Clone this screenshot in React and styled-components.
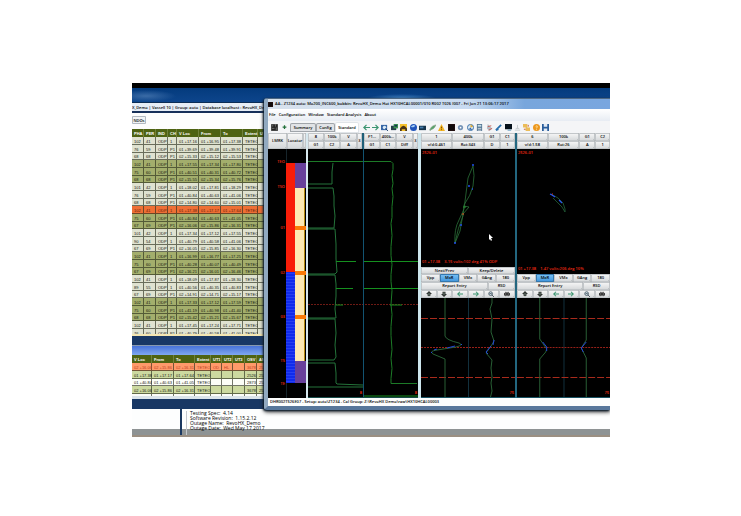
import React from "react";
import styled, { createGlobalStyle, css } from "styled-components";

const Global = createGlobalStyle`
  * { box-sizing: border-box; }
  body { margin: 0; background: #fff; font-family: "Open Sans", sans-serif; font-size: 4px; font-weight: 600; color: #000; }
  button { font: inherit; color: inherit; padding: 0; margin: 0; border: 0; min-width: 0; }
`;

const Page = styled.main`padding: 83px 131px 80px 132px;`;
const Desktop = styled.div`
  position: relative;
  overflow: hidden;
  background: #fdfefe;
`;

/* ---------- background application ---------- */
const TopStrip = styled.div`
  height: 20px;
  border-top: 5px solid #000;
  border-bottom: 1px solid #0b2c55;
  background: radial-gradient(ellipse 34px 4px at 270px 10px, #3d7fc0, transparent), radial-gradient(ellipse 30px 6px at 14px 8px, #3a6ba6, transparent), linear-gradient(#043b7d, #0d458c);
`;
const PathBar = styled.div`
  height: 10px;
  line-height: 9px;
  background: #e6edf6;
  border-bottom: 2px solid #17305a;
  white-space: nowrap;
  overflow: hidden;
`;
const FilterBar = styled.div`
  height: 16px;
  padding-top: 3px;
  background: #fdfdfd;
`;
const FilterButton = styled.button`
  height: 8px;
  width: 14px;
  line-height: 7px;
  background: #f2f4f6;
  box-shadow: inset 0 0 0 1px #b3bac2;
  border-radius: 1px;
`;
const Side = styled.div`width: 136px;`;
const Table = styled.table`
  width: 136px;
  table-layout: fixed;
  border-collapse: collapse;
  font-family: "Liberation Sans", Arial, sans-serif;
  font-size: 4px;
`;
const tones = { light: "#dfe2d0", green: "#a3ae6c", orange: "#ee6f35", white: "#fcfdf8", pale: "#ccd9a0", coral: "#ff9a6a" };
const Th = styled.th`
  height: 8px;
  line-height: 7px;
  padding: 0 0 0 2px;
  background: #4e6312;
  color: #fff;
  text-align: left;
  white-space: nowrap;
  overflow: hidden;
  box-shadow: inset -1px 0 #71813c;
`;
const Tr = styled.tr`
  height: ${(p) => (p.$short ? 7 : 8)}px;
  background: ${(p) => tones[p.$tone]};
  color: ${(p) => (p.$tone === "coral" ? "#c13d20" : p.$tone === "orange" ? "#641c08" : "#14160e")};
`;
const Td = styled.td`
  padding: 0 0 0 2px;
  font-weight: 400;
  line-height: 7px;
  white-space: nowrap;
  overflow: hidden;
  box-shadow: inset -1px -1px rgba(42, 46, 28, 0.65);
`;
const TableClip = styled.div`
  height: ${(p) => p.$h}px;
  overflow: hidden;
`;
const NavyBand = styled.div`
  height: 12px;
  background: #183764;
  border-top: 2px solid #f4e6b2;
  border-bottom: 1px solid #8799ae;
`;
const PanelTitle = styled.div`height: 9px; background: linear-gradient(#4772d8, #80a8f0);`;
const LowerBand = styled.div`height: 13px; background: #183764; border-top: 3px solid #dbe4ea;`;
const InfoRow = styled.div`
  display: grid;
  grid-template-columns: 50px 1fr;
  height: 28px;
  border-bottom: 2px solid #9b8f82;
  background: linear-gradient(#fdfefe 20px, #8e9394 20px);
`;
const InfoSide = styled.div`border-right: 2px solid #1a3860;`;
const Info = styled.div`
  margin: 2px 0 0 4px;
  padding-left: 3px;
  overflow: hidden;
  border-left: 1px solid #c4c9ce;
  font-size: 5px;
  font-weight: 400;
  line-height: 5px;
`;

/* ---------- analysis window ---------- */
const Window = styled.section`
  position: absolute;
  top: 15px;
  left: 132px;
  right: 0;
  border-left: 4px solid #91a9c0;
  border-bottom: 4px solid #58779b;
  border-top: 1px solid #4d6782;
  border-radius: 3px 0 0 3px;
  background: #eef1f5;
  box-shadow: -1px 1px 2px #091a2b, 0 2px 4px #333;
`;
const TitleBar = styled.header`
  display: flex;
  align-items: center;
  gap: 2px;
  height: 10px;
  line-height: 10px;
  white-space: nowrap;
  background: linear-gradient(90deg, #d8e2ed 0, #c8dbf1 200px, #78a6dc 75%, #79a6df);
`;
const MenuBar = styled.nav`
  display: flex;
  gap: 3px;
  height: 12px;
  padding-left: 1px;
  line-height: 12px;
  background: linear-gradient(#fff, #e7ecf3);
`;
const MenuItem = styled.button`background: none; white-space: nowrap; line-height: 12px;`;
const ToolBar = styled.div`
  display: flex;
  align-items: center;
  height: 12px;
  background: #f4f5f7;
`;
const ToolIcons = styled.div`
  display: flex;
  justify-content: space-between;
  width: 188px;
  margin-left: 3px;
`;
const IconButton = styled.button`
  display: grid;
  place-items: center;
  width: 8px;
  height: 9px;
  background: none;
`;
const Lead = styled.div`display: flex; gap: 4px; width: 22px; padding-left: 3px;`;
const Tab = styled.button`
  width: ${(p) => p.$w}px;
  height: ${(p) => (p.$on ? 11 : 9)}px;
  line-height: 9px;
  background: ${(p) => (p.$on ? "#fff" : "#e1e3e6")};
  box-shadow: inset 0 0 0 1px ${(p) => (p.$on ? "#e0e4e8" : "#a0a5aa")};
  border-radius: 2px 2px 0 0;
`;
const Body = styled.div`
  display: grid;
  grid-template-columns: 38fr 112fr 97fr 95fr;
  height: 265px;
  background: #000;
`;
const Pane = styled.div`
  display: flex;
  flex-direction: column;
  min-width: 0;
  border-left: ${(p) => p.$edge || "0"};
`;
const Row = styled.div`
  display: grid;
  grid-template-columns: ${(p) => p.$cols};
  grid-auto-rows: ${(p) => p.$h || 8}px;
  flex: none;
  background: #8e959b;
`;
const Key = styled.button`
  display: grid;
  place-items: center;
  overflow: hidden;
  white-space: nowrap;
  line-height: 6px;
  background: ${(p) => (p.$on ? "linear-gradient(#7dc4f5, #3b92dc)" : "linear-gradient(#f8f8f8, #d3d6d8)")};
  box-shadow: inset 0 0 0 1px ${(p) => (p.$on ? "#3478ae" : "#c2c6c9")}, inset -1px -1px #777d82;
  border-radius: 1px;
  ${(p) => p.$tall && css`grid-row: span 2;`}
`;
const TwinHead = styled.div`display: grid; grid-template-columns: 1fr 1fr; gap: 2px; background: #1e5f78;`;
const Plot = styled.div`
  position: relative;
  flex: ${(p) => (p.$h ? "none" : "1")};
  height: ${(p) => (p.$h ? p.$h + "px" : "auto")};
  min-height: 0;
  background: #000;
`;
const Chart = styled.svg`display: block; position: absolute; inset: 0; width: 100%; height: 100%;`;
const Mark = styled.span`
  position: absolute;
  color: #f02a12;
  line-height: 6px;
  white-space: pre;
  ${(p) => p.$top !== undefined && `top: ${p.$top}px;`}
  ${(p) => p.$bottom !== undefined && `bottom: ${p.$bottom}px;`}
  ${(p) => (p.$right !== undefined ? `right: ${p.$right}px;` : `left: ${p.$left || 1}px;`)}
`;
const Status = styled.footer`
  height: 8px;
  padding-left: 2px;
  line-height: 8px;
  background: #fcfdfd;
  white-space: nowrap;
`;

const icons = {
  qr: <path d="M0 0h8v8H0z M2 1v2M5 0v3M1 5h3M6 4v3" fill="#222" stroke="#777" />,
  plus: <path d="M4 2v6M1 5h6" stroke="#23703a" strokeWidth="2" />,
  left: <path d="M8 4H2M4 1L1 4l3 3" stroke="#3b9570" strokeWidth="1.4" fill="none" />,
  right: <path d="M0 4h6M4 1l3 3-3 3" stroke="#3b9570" strokeWidth="1.4" fill="none" />,
  find: <><path d="M0 1h7v6H0z" fill="#3666a5" /><circle cx="4" cy="4" r="2" fill="#d9e9f5" /><path d="M5 5l3 3" stroke="#173a68" /></>,
  screen: <><path d="M0 2h6v5H0z" fill="#263f4a" /><path d="M3 0h5v5H3z" fill="#3c9550" /><path d="M4 1h3v2H4z" fill="#163450" /></>,
  bridge: <><path d="M0 0h8v8H0z" fill="#f4c02b" /><path d="M0 8V5q4-6 8 0v3H6V6H2v2z" fill="#493316" /></>,
  globe: <><circle cx="4" cy="4" r="4" fill="#2054ba" /><path d="M1 3q3-3 5-1Q4 5 1 3" fill="#a5cef4" /></>,
  camera: <><path d="M0 2h8v5H0z" fill="#17344b" /><path d="M1 3h4v2H1z" fill="#457dac" /></>,
  leaf: <path d="M1 7Q2 2 8 1 6 6 1 7M0 6l2 2" fill="#58a569" stroke="#809c84" strokeWidth=".7" />,
  warn: <><path d="M4 0l4 8H0z" fill="#f2b323" /><path d="M4 3v2M4 6v1" stroke="#6b4300" /></>,
  black: <path d="M0 0h8v8H0z" fill="#100b0b" stroke="#592020" strokeWidth=".5" />,
  gear: <><circle cx="4" cy="4" r="3" fill="#7795b8" /><circle cx="4" cy="4" r="1" fill="#fff" /></>,
  pie: <><circle cx="4" cy="4" r="3.5" fill="#d8e6ee" stroke="#2b65a3" /><path d="M4 4V0l3 3z" fill="#e1ad35" /><path d="M4 4l2 3-4-1z" fill="#2e62a9" /></>,
  calc: <><path d="M1 0h6v8H1z" fill="#577896" /><path d="M2 1h4v2H2z" fill="#c7e0e9" /><path d="M2 5h4M2 7h4" stroke="#dae0e4" /></>,
  tool: <><path d="M2 0l5 5-3 3-3-3z" fill="#b4bdc6" /><path d="M2 3l4-1M3 7l4-2" stroke="#c75248" /></>,
  pen: <path d="M1 7L7 1M1 7l3-1" stroke="#266eab" strokeWidth="2" />,
  monitor: <><path d="M0 0h8v6H0z" fill="#06111a" /><path d="M3 7h4" stroke="#4c8bb9" /></>,
  pale: <path d="M1 7h6M2 5h4M4 1v4" stroke="#c2c8cc" fill="none" />,
  folders: <><path d="M0 0h5v4H0zM3 4h5v4H3z" fill="#ebbc58" /><path d="M6 1v2M1 6h2" stroke="#c24c32" /></>,
  orange: <><circle cx="4" cy="4" r="4" fill="#ec981e" /><path d="M3 3q2-2 2 0L4 5M4 6v1" stroke="#ffe4a7" fill="none" /></>,
  save: <><path d="M0 0h8v8H0z" fill="#2a5d9b" /><path d="M2 0h4v3H2zM2 5h4v3H2z" fill="#e2eaf3" /></>,
  up: <><path d="M4 0L0 4h2v2q2 2 4 0V4h2z" fill="#303532" /><path d="M4 3v3" stroke="#8da79a" /></>,
  down: <><path d="M4 8L0 4h2V1h4v3h2z" fill="#303532" /><path d="M4 2v3" stroke="#8da79a" /></>,
  zoom: <><circle cx="3.5" cy="3.5" r="2.5" fill="#d6e8f0" stroke="#354753" /><path d="M5 5l3 3M2 3.5h3" stroke="#293740" /></>,
  print: <><path d="M0 3l2-1V1h1v1h2V1h1v1l2 1v3H6v1H5V6H3v1H2V6H0z" fill="#333" /><path d="M1 4h2M5 4h2" stroke="#999" /></>,
};
const Glyph = ({ name, size = 8 }) => <svg width={size} height={size} viewBox="0 0 8 8" aria-hidden="true">{icons[name]}</svg>;

const raw = `102 41 1 01 17.16 16.95 17.38
76 59 P1 01 39.69 39.48 39.91
68 68 P1 02 15.33 15.12 15.53
102 41 1 01 17.55 17.34 17.80
75 60 P1 01 40.51 40.31 40.72
68 68 P1 02 15.55 15.34 15.76
101 42 1 01 18.02 17.81 18.29
76 59 P1 01 40.84 40.63 41.06
68 68 P1 02 14.80 14.60 15.01
102 41 1 01 17.38 17.17 17.64
75 60 P1 01 40.84 40.63 41.05
67 69 P1 02 16.06 15.86 16.31
101 42 1 01 17.34 17.12 17.55
90 54 1 01 40.79 40.58 41.06
67 69 P1 02 16.05 15.85 16.30
102 41 1 01 16.99 16.77 17.25
75 60 P1 01 40.28 40.07 40.49
67 69 P1 02 16.21 16.01 16.46
102 41 1 01 18.09 17.87 18.30
89 55 1 01 40.56 40.35 40.83
67 69 P1 02 14.91 14.71 15.17
102 41 1 01 17.33 17.12 17.59
75 60 P1 01 41.19 40.98 41.40
68 68 P1 02 15.42 15.21 15.67
102 41 1 01 17.45 17.24 17.71
76 60 P1 01 40.79 40.58 41.00`;
const upper = raw.split("\n").map((l) => {
  const [a, b, c, n, v, f, t] = l.split(" ");
  return [a, b, "ODP", c, `${n} +${v}`, `${n} +${f}`, `${n} +${t}`, "TETEO", ""];
});
const lower = [
  ["coral", "02 +16.06", "02 +15.86", "02 +16.31", "TETEO", "OD", "HL", "", "3678", "252"],
  ["pale", "01 +17.38", "01 +17.17", "01 +17.64", "TETEO", "", "", "", "2526", "252"],
  ["white", "01 +40.84", "01 +40.63", "01 +41.05", "TETEO", "", "", "", "2873", "252"],
  ["pale", "02 +16.06", "02 +15.86", "02 +16.31", "TETEO", "", "", "", "3678", "252"],
  ["white", "02 +17.38", "02 +17.17", "02 +17.59", "TETEO", "OD", "HL", "", "2526", "252"],
];

function Grid({ widths, heads, rows, tone }) {
  return (
    <Table>
      <colgroup>{widths.map((w, i) => <col key={i} width={w} />)}</colgroup>
      <thead><tr>{heads.map((h, i) => <Th key={i}>{h}</Th>)}</tr></thead>
      <tbody>
        {rows.map((r, i) => (
          <Tr key={i} $short={i % 3 === 2} $tone={tone(i)}>{r.map((c, j) => <Td key={j}>{c}</Td>)}</Tr>
        ))}
      </tbody>
    </Table>
  );
}

function Background() {
  return (
    <>
      <TopStrip />
      <PathBar>X_Demo | Vassell 10 | Group: auto | Database localhost : RevoHX_Demo_</PathBar>
      <Side>
        <FilterBar><FilterButton>NDOs</FilterButton></FilterBar>
        <TableClip $h={205}>
          <Grid
            widths={[12, 12, 12, 9, 22, 22, 22, 15, 10]}
            heads={["PHA", "PER", "IND", "CH", "V Loc", "From", "To", "Extent", "U"]}
            rows={upper}
            tone={(i) => (i === 9 ? "orange" : Math.floor(i / 3) % 2 ? "green" : "light")}
          />
        </TableClip>
      </Side>
      <NavyBand />
      <PanelTitle />
      <TableClip $h={41}>
        <Grid
          widths={[20, 22, 21, 16, 11, 11, 12, 12, 11]}
          heads={["V Loc", "From", "To", "Extent", "UT1", "UT2", "UT3", "OSV", "AN"]}
          rows={lower.map((r) => r.slice(1))}
          tone={(i) => lower[i][0]}
        />
      </TableClip>
      <LowerBand />
      <InfoRow>
        <InfoSide />
        <Info>Testing Spec:&nbsp; 4.14<br />Software Revision:&nbsp; 1.15.2.12<br />Outage Name:&nbsp; RevoHX_Demo<br />Outage Date:&nbsp; Wed May 17 2017</Info>
      </InfoRow>
    </>
  );
}

function Locator() {
  const marks = [["TEO", 10], ["TSO", 35], ["01", 76], ["02", 121], ["03", 165], ["TS", 209], ["TE", 232]];
  return (
    <Pane>
      <Row $cols="19fr 16fr 3fr" $h={16}><Key>LMRK</Key><Key>Locator</Key><Key /></Row>
      <Plot>
        <Chart viewBox="0 0 38 249" preserveAspectRatio="none">
          <path d="M18.500 0V249" stroke="#17252b" />
          <path d="M18 14h9v109h-9z" fill="#f91d08" />
          <path d="M18 123h9v111h-9z" fill="#102bec" />
          <path d="M22.500 124V234" stroke="#5267ff" strokeWidth="9" strokeDasharray="1 2" opacity=".35" />
          <path d="M27 14h11v25H27zM27 212h11v22H27z" fill="#68409b" />
          <path d="M27 39h10v173H27z" fill="#feeab3" />
          <path d="M36.500 39V212" stroke="#b58c10" />
          <path d="M27 77h11v4H27zM27 122h11v4H27zM27 166h11v4H27z" fill="#fb7b08" />
        </Chart>
        {marks.map(([t, y]) => <Mark key={t} $top={y} $right={21}>{t}</Mark>)}
      </Plot>
    </Pane>
  );
}

function StripCharts() {
  return (
    <Pane $edge="2px solid #d7e8ef">
      <TwinHead>
        <Row $cols="16fr 16fr 17fr 5fr">
          <Key>8</Key><Key>100k</Key><Key>V</Key><Key $tall>3</Key><Key>G1</Key><Key>C2</Key><Key>A</Key>
        </Row>
        <Row $cols="16fr 16fr 17fr 5fr">
          <Key>P1...</Key><Key>400k...</Key><Key>V</Key><Key $tall>3</Key><Key>G1</Key><Key>C1</Key><Key>Diff</Key>
        </Row>
      </TwinHead>
      <Plot>
        <Chart viewBox="0 0 110 249" preserveAspectRatio="none" fill="none">
          <path d="M0 155.500H110" stroke="#6d1a14" strokeDasharray="2 1" />
          <path d="M0 12.500h83l2 2v6l-1 6 1 8-1 5 1 8-1 10 0 11-1 6 1 12-1 11v9l1 9-1 10v7l1 9-1 14 1 10-1 12v9l1 14-1 9 1 10-1 10v5h26" stroke="#1c7a27" />
          <path d="M25 14l-1 9v12H0M0 39h25l1 8v10l1 10-1 12H0M0 80h27l1 15v15l1 13-2 2H0M0 126h27l1 9v12l-1 13 1 9-28 0M0 170h27l1 14-1 12 1 12-2 3H0M0 214h27l1 10v10l1 1 26 1M0 238h55" stroke="#24733a" />
          <path d="M28 112.500h20M55 112.500h55M28 139.500h17M55 139.500h55M28 156h7M82 156h12M55 247h55" stroke="#15901f" />
          <path d="M55.500 0V249" stroke="#125371" />
          <path d="M0 248.500H110" stroke="#174c49" />
        </Chart>
        <Mark $bottom={2} $right={56}>8</Mark><Mark $bottom={2} $right={1}>8</Mark>
      </Plot>
    </Pane>
  );
}

const traces = {
  a: {
    head: ["1", "400k", "G1", "C1", "v/d:0.461", "Rot:343", "D", "1"],
    text: "01 +17.38    3.15 volts:102 deg 41% ODP", last: "75",
    left: "M24 0V38Q25 42 38 45 43 47 35 49L16 52Q8 53 12 56L24 61V100",
    leftBlue: "M41 46l-1 1M34 48l-8 2M16 51l-3 1M10 54l1 1",
    right: "M71 0v5l-2 6 2 10-1 13 3 9-3 5-5 7 6 7-1 8 1 9-1 6 1 8-3 12",
    rightBlue: "M73 42l-1 5M70 48l-5 6 2 2",
  },
  b: {
    head: ["6", "100k", "G1", "C2", "v/d:1.58", "Rot:26", "A", "1"],
    text: "01 +17.38    1.47 volts:206 deg 10%", last: "75",
    left: "M23 0V41L30 51 29 54 23 61V100", leftBlue: "M26 44l4 5v4",
    right: "M70 0V42l-5 8 5 10V100", rightBlue: "M70 44l-5 6 2 4",
  },
};

function SignalPane({ kind }) {
  const d = traces[kind];
  const a = kind === "a";
  return (
    <Pane $edge={a ? "3px solid #cee6ed" : "2px solid #236780"}>
      <Row $cols="31fr 32fr 16fr 15fr">{d.head.map((t, i) => <Key key={i}>{t}</Key>)}</Row>
      <Plot>
        {a ? (
          <Chart viewBox="0 0 94 118" fill="none">
            <path d="M52 17Q54 26 52 37 50 46 43 56L42 67Q37 78 34 94 33 80 38 71L43 60 47 29zM43 57l5 1-6 7-3 17-5 12" stroke="#2b7039" strokeWidth=".8" />
            <path d="M42 58h3" stroke="#2a9632" /><path d="M41 65h2" stroke="#ed5b24" />
            <path d="M51 16h2M47 37h2M39 76h2M33 94h2M51 40h1" stroke="#2050eb" strokeWidth="1.500" />
            <path d="M68 85v6l1-1 1 2 1-1-1-2h2z" fill="#fff" />
          </Chart>
        ) : (
          <Chart viewBox="0 0 93 125" fill="none">
            <path d="M34 45l7 4 5 5 2 6v3l-3-5-9-9" stroke="#23633a" strokeWidth=".8" />
            <path d="M33 45l2 1 3 2M42 51l3 3" stroke="#2854ef" strokeWidth="1.200" /><path d="M35 45h1" stroke="#de3019" />
          </Chart>
        )}
        <Mark $top={1}>2526-01</Mark>
        <Mark $bottom={2}>{d.text}</Mark>
      </Plot>
      {a && <Row $cols="1fr 1fr" $h={7}><Key>Next/Prev</Key><Key>Keep/Delete</Key></Row>}
      <Row $cols="repeat(5, 1fr)"><Key>Vpp</Key><Key $on>MxR</Key><Key>VMx</Key><Key>GAng</Key><Key>180</Key></Row>
      <Row $cols="67fr 27fr"><Key>Report Entry</Key><Key>RSD</Key></Row>
      <Row $cols="repeat(6, 1fr)">
        {[["up", "Previous"], ["down", "Next"], ["left", "Back"], ["right", "Forward"], ["zoom", "Zoom"], ["print", "Print"]].map(([n, l]) => <Key key={n} aria-label={l}><Glyph name={n} size={6} /></Key>)}
      </Row>
      <Plot $h={100}>
        <Chart viewBox="0 0 94 100" preserveAspectRatio="none" fill="none">
          <path d="M47.500 0V100" stroke="#12303d" />
          <path d="M0 20.500H94" stroke="#a92b1c" strokeDasharray="7 2" />
          <path d="M0 79.500H94" stroke="#a92b1c" strokeDasharray="7 2" />
          <path d="M0 49.500H94" stroke="#982018" strokeDasharray="2 1" />
          <path d={d.left} stroke="#285f35" /><path d={d.right} stroke="#285f35" />
          <path d={d.leftBlue} stroke="#2348d8" /><path d={d.rightBlue} stroke="#2348d8" />
          <path d="M0 99.500H94" stroke="#175262" />
        </Chart>
        <Mark $bottom={2} $right={1}>{d.last}</Mark>
      </Plot>
    </Pane>
  );
}

const tools = ["left", "right", "find", "screen", "bridge", "globe", "camera", "leaf", "warn", "black", "gear", "pie", "calc", "tool", "pen", "monitor", "pale", "folders", "orange", "save"];

export default function App() {
  return (
    <Page>
      <Global />
      <Desktop>
        <Background />
        <Window>
          <TitleBar><Glyph name="black" size={5} />AA - Z1234 auto: Mo200_INC600_bobbin: RevoHX_Demo Hot HX10HCAL00001/010 R002 T026 I007 - Fri Jun 21 13:06:17 2017</TitleBar>
          <MenuBar>{["File", "Configuration", "Window", "Standard Analysis", "About"].map((m) => <MenuItem key={m}>{m}</MenuItem>)}</MenuBar>
          <ToolBar>
            <Lead><Glyph name="qr" size={7} /><Glyph name="plus" size={5} /></Lead>
            <Tab $w={26}>Summary</Tab><Tab $w={19}>Config</Tab><Tab $w={24} $on>Standard</Tab>
            <ToolIcons>{tools.map((t) => <IconButton key={t} aria-label={t}><Glyph name={t} size={7} /></IconButton>)}</ToolIcons>
          </ToolBar>
          <Body>
            <Locator />
            <StripCharts />
            <SignalPane kind="a" />
            <SignalPane kind="b" />
          </Body>
          <Status>DHR002TS26E07 - Setup: auto\Z1234 - Cal Group: Z:\RevoHX Demo\raw\HX10HCAL00003</Status>
        </Window>
      </Desktop>
    </Page>
  );
}
